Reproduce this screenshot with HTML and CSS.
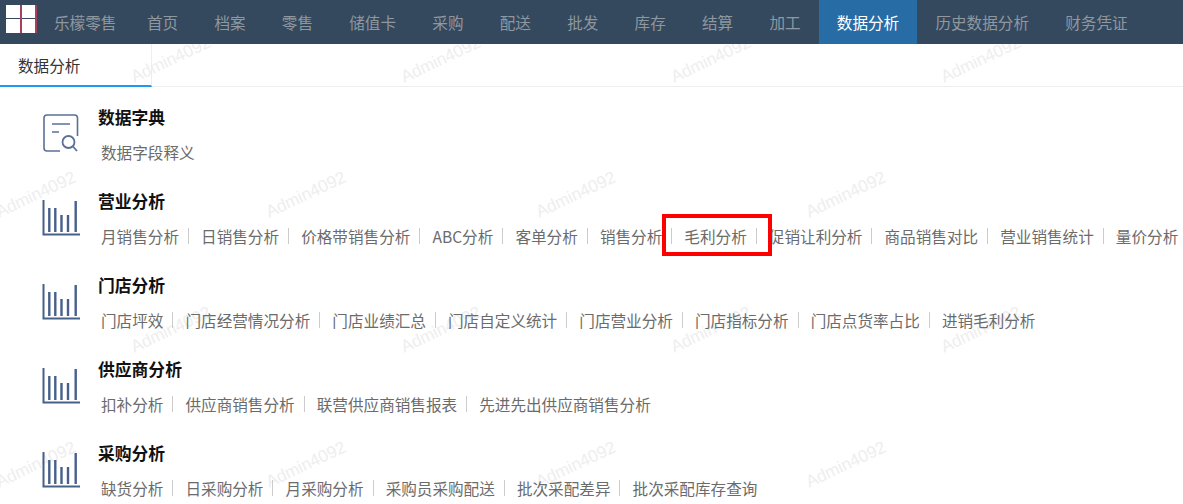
FILE: index.html
```html
<!DOCTYPE html>
<html lang="zh-CN">
<head>
<meta charset="utf-8">
<title>数据分析</title>
<link rel="stylesheet" href="styles.css">
</head>
<body>
<svg class="defs" width="0" height="0" aria-hidden="true">
  <symbol id="bars" viewBox="0 0 38 36">
    <path d="M1.500 0V34.500H38" fill="none" stroke="#47608a" stroke-width="2"/>
    <path d="M7.300 8V32M13.300 8V32M19.500 15V32M26 15V32M33.700 1V32" fill="none" stroke="#47608a" stroke-width="2.400"/>
  </symbol>
</svg>
<div class="marks" aria-hidden="true">
  <div class="mark-row"><span>Admin4092</span><span>Admin4092</span><span>Admin4092</span><span>Admin4092</span></div>
  <div class="mark-row shift"><span>Admin4092</span><span>Admin4092</span><span>Admin4092</span><span>Admin4092</span></div>
  <div class="mark-row"><span>Admin4092</span><span>Admin4092</span><span>Admin4092</span><span>Admin4092</span></div>
  <div class="mark-row shift"><span>Admin4092</span><span>Admin4092</span><span>Admin4092</span><span>Admin4092</span></div>
</div>
<header class="nav">
  <div class="logo"><i></i><i></i><i></i><i></i></div>
  <a class="brand">乐檬零售</a>
  <a class="item">首页</a>
  <a class="item">档案</a>
  <a class="item">零售</a>
  <a class="item">储值卡</a>
  <a class="item">采购</a>
  <a class="item">配送</a>
  <a class="item">批发</a>
  <a class="item">库存</a>
  <a class="item">结算</a>
  <a class="item">加工</a>
  <a class="item active">数据分析</a>
  <a class="item">历史数据分析</a>
  <a class="item">财务凭证</a>
</header>
<div class="tabs"><div class="tab">数据分析</div></div>
<main class="content">
  <section class="group">
    <svg class="icon-doc" viewBox="0 0 36 38" aria-hidden="true">
      <path d="M34.500 22V4Q34.500 1 31.500 1H4Q1 1 1 4V34Q1 37 4 37H17" fill="none" stroke="#5b7096" stroke-width="1.600"/>
      <path d="M9 10H27M9 18H16" fill="none" stroke="#5b7096" stroke-width="1.600"/>
      <circle cx="25.500" cy="28" r="6" fill="none" stroke="#5b7096" stroke-width="1.800"/>
      <path d="M30 32.500L34 37" fill="none" stroke="#5b7096" stroke-width="1.800"/>
    </svg>
    <div class="body">
      <h3>数据字典</h3>
      <div class="links"><a>数据字段释义</a></div>
    </div>
  </section>
  <section class="group">
    <svg class="icon-bars" aria-hidden="true"><use href="#bars"/></svg>
    <div class="body">
      <h3>营业分析</h3>
      <div class="links"><a>月销售分析</a><a>日销售分析</a><a>价格带销售分析</a><a>ABC分析</a><a>客单分析</a><a>销售分析</a><a>毛利分析</a><a>促销让利分析</a><a>商品销售对比</a><a>营业销售统计</a><a>量价分析</a></div>
    </div>
  </section>
  <section class="group">
    <svg class="icon-bars" aria-hidden="true"><use href="#bars"/></svg>
    <div class="body">
      <h3>门店分析</h3>
      <div class="links"><a>门店坪效</a><a>门店经营情况分析</a><a>门店业绩汇总</a><a>门店自定义统计</a><a>门店营业分析</a><a>门店指标分析</a><a>门店点货率占比</a><a>进销毛利分析</a></div>
    </div>
  </section>
  <section class="group">
    <svg class="icon-bars" aria-hidden="true"><use href="#bars"/></svg>
    <div class="body">
      <h3>供应商分析</h3>
      <div class="links"><a>扣补分析</a><a>供应商销售分析</a><a>联营供应商销售报表</a><a>先进先出供应商销售分析</a></div>
    </div>
  </section>
  <section class="group">
    <svg class="icon-bars" aria-hidden="true"><use href="#bars"/></svg>
    <div class="body">
      <h3>采购分析</h3>
      <div class="links"><a>缺货分析</a><a>日采购分析</a><a>月采购分析</a><a>采购员采购配送</a><a>批次采配差异</a><a>批次采配库存查询</a></div>
    </div>
  </section>
</main>
<div class="callout" aria-hidden="true"></div>
</body>
</html>
```
FILE: styles.css
```css
* { box-sizing: border-box; }
html, body { margin: 0; height: 100%; }
body {
  position: relative;
  height: 504px;
  overflow: hidden;
  background: #fff;
  font-family: "Noto Sans CJK SC", "Liberation Sans", sans-serif;
  font-size: 15.6px;
}
.defs { position: absolute; }

.nav {
  position: relative;
  display: flex;
  height: 44px;
  background: #34495e;
  align-items: stretch;
}
.logo {
  display: grid;
  grid-template-columns: 14px 13px;
  grid-template-rows: 13px 14px;
  column-gap: 2px;
  row-gap: 1px;
  flex: none;
  margin: 5px 0 0 6px;
  height: 28px;
  width: 31px;
  background: linear-gradient(90deg, #34495e 14px, #a8405c 14px, #a8405c 16px, #34495e 16px, #34495e 29px, #a8405c 29px);
}
.logo i { background: #fff; }
.brand, .item {
  display: flex;
  align-items: center;
  color: #8f979f;
  line-height: 44px;
}
.brand { margin-left: 17px; margin-right: 12.500px; }
.item { padding: 0 18.120px; }
.item.active { background: #286ca5; color: #fff; }

.tabs {
  position: relative;
  display: flex;
  height: 43px;
  border-bottom: 1px solid #eee;
}
.tab {
  width: 152px;
  height: 43px;
  padding-left: 18px;
  line-height: 42px;
  color: #333;
  border-right: 1px solid #eee;
  border-bottom: 2px solid #1a9af0;
}

.content { position: relative; padding-left: 42px; }
.group {
  display: flex;
  height: 84px;
  padding-top: 18px;
}
.icon-doc { width: 36px; height: 38px; margin: 9px 19px 0 1px; flex: none; }
.icon-bars { width: 38px; height: 36px; margin: 11px 18px 0 0; flex: none; }
.body { min-width: 0; }
h3 {
  margin: 0;
  font-size: 16.800px;
  line-height: 24px;
  font-weight: 700;
  color: #111;
}
.links {
  display: flex;
  margin: 11px 0 0 3px;
  white-space: nowrap;
  line-height: 24px;
  color: #6b6b6b;
}
.links a {
  display: flex;
  align-items: center;
}
.links a:not(:last-child)::after {
  content: "";
  width: 1px;
  height: 16px;
  margin: 0 12.100px 0 9px;
  background: #ccc;
}

.marks {
  position: absolute;
  top: 44px;
  left: 0;
  right: 0;
  bottom: 0;
  overflow: hidden;
}
.mark-row {
  display: flex;
  height: 135px;
  width: 1400px;
  margin-left: 36px;
  align-items: center;
}
.mark-row:first-child { margin-top: -52px; }
.mark-row.shift { margin-left: -99px; }
.mark-row span {
  flex: 0 0 270px;
  width: 270px;
  font: 17px "Liberation Sans", sans-serif;
  color: #eeeeee;
  text-align: center;
  transform: rotate(-25deg);
}

.callout {
  position: absolute;
  left: 662px;
  top: 214px;
  width: 110px;
  height: 42px;
  border: 4px solid #f00;
}
```
